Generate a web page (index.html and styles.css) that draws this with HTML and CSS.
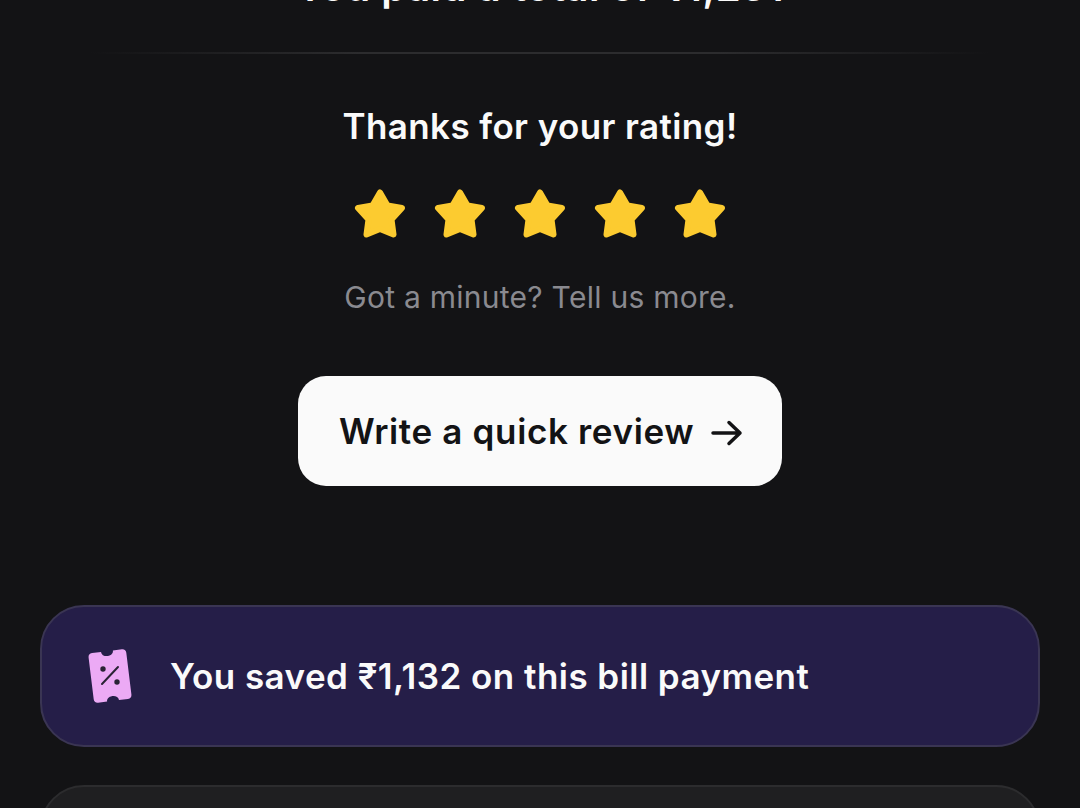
FILE: index.html
```html
<!DOCTYPE html>
<html>
<head>
  <title>Payment Details</title>
  <link rel="stylesheet" href="styles.css">
</head>
<body>
  <div class="page">
    <p class="total">You paid a total of ₹1,251</p>
    <div class="divider"></div>

    <div class="rating">
      <h2>Thanks for your rating!</h2>
      <div class="stars">
        <svg class="star" viewBox="0 0 52 50"><polygon points="26,3.500 33.500,16.500 48,19 37.500,30.500 39.500,45.500 26,40 12.500,45.500 14.500,30.500 4,19 18.500,16.500"/></svg>
        <svg class="star" viewBox="0 0 52 50"><polygon points="26,3.500 33.500,16.500 48,19 37.500,30.500 39.500,45.500 26,40 12.500,45.500 14.500,30.500 4,19 18.500,16.500"/></svg>
        <svg class="star" viewBox="0 0 52 50"><polygon points="26,3.500 33.500,16.500 48,19 37.500,30.500 39.500,45.500 26,40 12.500,45.500 14.500,30.500 4,19 18.500,16.500"/></svg>
        <svg class="star" viewBox="0 0 52 50"><polygon points="26,3.500 33.500,16.500 48,19 37.500,30.500 39.500,45.500 26,40 12.500,45.500 14.500,30.500 4,19 18.500,16.500"/></svg>
        <svg class="star" viewBox="0 0 52 50"><polygon points="26,3.500 33.500,16.500 48,19 37.500,30.500 39.500,45.500 26,40 12.500,45.500 14.500,30.500 4,19 18.500,16.500"/></svg>
      </div>
      <p class="hint">Got a minute? Tell us more.</p>
      <button class="review-btn">
        <span>Write a quick review</span>
        <svg class="arrow" viewBox="0 0 32 26"><path d="M2 13H29M18 2.500L29 13L18 23.500"/></svg>
      </button>
    </div>

    <div class="saved">
      <svg class="ticket" viewBox="0 0 46 56">
        <path class="ticket-body" transform="rotate(-7 23 28)" d="M8 3H17C17 9.500 29 9.500 29 3H38C40.500 3 42 4.500 42 7V49C42 51.500 40.500 53 38 53H29C29 46.500 17 46.500 17 53H8C5.500 53 4 51.500 4 49V7C4 4.500 5.500 3 8 3Z"/>
        <path class="ticket-slash" d="M31 19L15 36"/>
        <circle class="ticket-dot" cx="16" cy="21" r="2.700"/>
        <circle class="ticket-dot" cx="30" cy="34" r="2.700"/>
      </svg>
      <span>You saved ₹1,132 on this bill payment</span>
    </div>

    <div class="next-card"></div>
  </div>
</body>
</html>
```

FILE: styles.css
```css
html, body {
  margin: 0;
  padding: 0;
  height: 808px;
  overflow: hidden;
}
body {
  font-family: "Inter", "Noto Sans", sans-serif;
  background-color: #131315;
  color: #fafafa;
}
.page {
  padding: 0 40px;
  height: 808px;
  overflow: hidden;
}
.total {
  margin: -39px 0 0;
  height: 52px;
  line-height: 52px;
  font-size: 40px;
  font-weight: 600;
  letter-spacing: 0.5px;
  text-align: center;
}
.divider {
  height: 2px;
  margin: 39px 50px 0;
  background: linear-gradient(90deg, rgba(44, 44, 46, 0), #2c2c2e 30%, #2c2c2e 70%, rgba(44, 44, 46, 0));
}
.rating {
  display: flex;
  flex-direction: column;
  align-items: center;
}
.rating h2 {
  margin: 48px 0 0;
  height: 48px;
  line-height: 48px;
  font-size: 35px;
  font-weight: 600;
  letter-spacing: 0.4px;
}
.stars {
  display: flex;
  gap: 28px;
  margin-top: 39px;
}
.star {
  display: block;
  width: 52px;
  height: 50px;
}
.star polygon {
  fill: #fccb30;
  stroke: #fccb30;
  stroke-width: 6;
  stroke-linejoin: round;
}
.hint {
  margin: 36px 0 0;
  height: 44px;
  line-height: 44px;
  font-size: 30px;
  letter-spacing: 0.26px;
  color: #8a8a90;
}
.review-btn {
  display: flex;
  align-items: center;
  gap: 17px;
  box-sizing: border-box;
  width: 484px;
  height: 110px;
  margin-top: 57px;
  padding: 0 38px 0 41px;
  border: none;
  border-radius: 28px;
  background-color: #fafafa;
  color: #131315;
  font-family: inherit;
  font-size: 35px;
  font-weight: 600;
  letter-spacing: 0.65px;
  white-space: nowrap;
}
.arrow {
  width: 32px;
  height: 26px;
  margin-top: 4px;
  flex-shrink: 0;
}
.arrow path {
  fill: none;
  stroke: #131315;
  stroke-width: 3.500;
  stroke-linecap: round;
  stroke-linejoin: round;
}
.saved {
  display: flex;
  align-items: center;
  gap: 37px;
  box-sizing: border-box;
  height: 142px;
  margin-top: 119px;
  padding-left: 45px;
  border: 2px solid #3a3553;
  border-radius: 44px;
  background-color: #251e48;
  font-size: 35px;
  font-weight: 600;
  letter-spacing: 0.46px;
}
.ticket {
  width: 46px;
  height: 56px;
  flex-shrink: 0;
}
.ticket-body {
  fill: #ecaaf5;
}
.ticket-slash {
  fill: none;
  stroke: #2a2335;
  stroke-width: 2;
  stroke-linecap: round;
}
.ticket-dot {
  fill: #2a2335;
}
.next-card {
  box-sizing: border-box;
  height: 200px;
  margin-top: 38px;
  border: 2px solid #2c2c2e;
  border-radius: 44px;
  background-color: #1f1f21;
}
```
